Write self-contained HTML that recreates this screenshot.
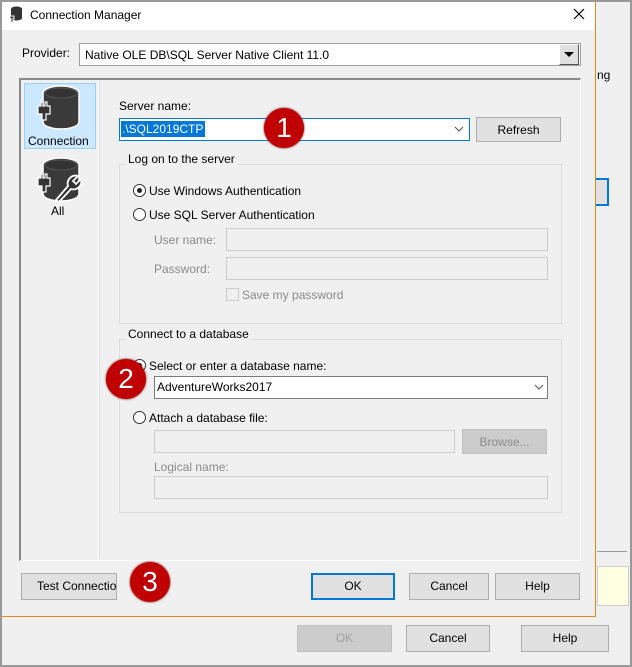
<!DOCTYPE html>
<html><head><meta charset="utf-8"><style>
*{box-sizing:border-box;margin:0;padding:0}
body{width:632px;height:667px;overflow:hidden;background:#f0f0f0;font-family:"Liberation Sans",sans-serif;font-size:12px;color:#000;position:relative}
.a{position:absolute}
.t{position:absolute;white-space:nowrap;line-height:14px}
.in{position:absolute;background:#fff;border:1px solid #7a7a7a}
.dis{position:absolute;background:#f0f0f0;border:1px solid #ccc}
.btn{position:absolute;background:#e1e1e1;border:1px solid #adadad;text-align:center;line-height:24px;white-space:nowrap;overflow:hidden}
.g{color:#6d6d6d}
.grp{position:absolute;border:1px solid #dcdcdc}
.leg{position:absolute;background:#f0f0f0;padding:0 3px;line-height:14px}
.rad{position:absolute;width:13px;height:13px;border:1px solid #333;border-radius:50%;background:#fff}
.badge{position:absolute;width:40px;height:40px;border-radius:50%;background:#c00000;color:#fff;font-size:28px;text-align:center;line-height:40px;box-shadow:0 0 2px #600}
</style></head><body>
<div class="a" style="left:0;top:0;width:632px;height:2px;background:#999"></div>
<div class="a" style="left:0;top:0;width:2px;height:667px;background:#999"></div>
<div class="a" style="left:0;top:665px;width:632px;height:2px;background:#999"></div>
<div class="a" style="left:630px;top:0;width:2px;height:667px;background:#999"></div>
<div class="t" style="left:597px;top:68px;">ng</div>
<div class="a" style="left:590px;top:178px;width:19px;height:28px;border:2px solid #0078d7;background:#e1e1e1"></div>
<div class="a" style="left:597px;top:551px;width:30px;height:1px;background:#999"></div>
<div class="a" style="left:597px;top:566px;width:32px;height:40px;background:#ffffe1;border:1px solid #ccc"></div>
<div class="btn g" style="left:297px;top:625px;width:95px;height:27px;background:#ccc;border-color:#bfbfbf;color:#a0a0a0">OK</div>
<div class="btn" style="left:406px;top:625px;width:84px;height:27px">Cancel</div>
<div class="btn" style="left:521px;top:625px;width:88px;height:27px">Help</div>

<div class="a" style="left:2px;top:2px;width:594px;height:615px;background:#f0f0f0;border-right:1px solid #e08a1e;border-bottom:1px solid #e08a1e"></div>
<div class="a" style="left:2px;top:2px;width:593px;height:28px;background:#fff"></div>
<svg class="a" style="left:9px;top:6px" width="14" height="17" viewBox="0 0 14 17"><ellipse cx="7.5" cy="3" rx="5.5" ry="2.5" fill="#333"/><rect x="2" y="3" width="11" height="9" fill="#333"/><ellipse cx="7.5" cy="12" rx="5.5" ry="2.5" fill="#333"/><rect x="1" y="10" width="4" height="3" fill="#333" stroke="#fff"/><rect x="2.5" y="13" width="1" height="3" fill="#333"/></svg>
<div class="t" style="left:30px;top:8px">Connection Manager</div>
<svg class="a" style="left:573px;top:8px" width="12" height="12"><path d="M1 1L11 11M11 1L1 11" stroke="#000" stroke-width="1.2"/></svg>

<div class="t" style="left:22px;top:46px">Provider:</div>
<div class="in" style="left:79px;top:43px;width:502px;height:23px;border-color:#a0a0a0"></div>
<div class="t" style="left:85px;top:48px">Native OLE DB\SQL Server Native Client 11.0</div>
<div class="a" style="left:559px;top:44px;width:20px;height:21px;background:#e1e1e1;border:1px solid #fff;border-right-color:#555;border-bottom-color:#555"></div>
<svg class="a" style="left:564px;top:52px" width="10" height="6"><path d="M0 0H10L5 5Z" fill="#000"/></svg>

<div class="a" style="left:19px;top:78px;width:562px;height:483px;border:2px solid #8a8a8a;border-right:1px solid #fff;border-bottom:1px solid #fff"></div>
<div class="a" style="left:21px;top:80px;width:78px;height:479px;border-right:1px solid #fff;box-shadow:1px 0 0 #ddd"></div>
<div class="a" style="left:24px;top:83px;width:72px;height:66px;background:#cce8ff;border:1px solid #99d1ff"></div>
<svg class="a" style="left:34px;top:84px" width="50" height="48" viewBox="0 0 50 48"><ellipse cx="27" cy="9" rx="18" ry="7" fill="#3a3a3a" stroke="#fff" stroke-width="1.5"/><path d="M9 9V38A18 7 0 0 0 45 38V9" fill="#3a3a3a" stroke="#fff" stroke-width="1.5"/><ellipse cx="27" cy="9" rx="16" ry="5" fill="#333" stroke="#555"/><path d="M4 22h3v-4h2v4h2v-4h2v4h3v8h-4v6h-4v-6h-4z" fill="#333" stroke="#fff" stroke-width="1.2"/></svg>
<div class="t" style="left:28px;top:134px">Connection</div>
<svg class="a" style="left:34px;top:156px" width="50" height="48" viewBox="0 0 50 48"><ellipse cx="27" cy="9" rx="18" ry="7" fill="#3a3a3a" stroke="#fff" stroke-width="1.5"/><path d="M9 9V38A18 7 0 0 0 45 38V9" fill="#3a3a3a" stroke="#fff" stroke-width="1.5"/><ellipse cx="27" cy="9" rx="16" ry="5" fill="#333" stroke="#555"/><path d="M4 22h3v-4h2v4h2v-4h2v4h3v8h-4v6h-4v-6h-4z" fill="#333" stroke="#fff" stroke-width="1.2"/><path d="M22 44L34 30A8 8 0 0 1 44 20L39 25L42 28L47 23A8 8 0 0 1 37 33L25 46Z" fill="#333" stroke="#fff" stroke-width="1.8"/></svg>
<div class="t" style="left:51px;top:204px">All</div>

<div class="t" style="left:119px;top:99px">Server name:</div>
<div class="in" style="left:119px;top:118px;width:351px;height:23px;border-color:#0078d7"></div>
<div class="a" style="left:121px;top:121px;width:84px;height:16px;background:#0078d7"></div>
<div class="t" style="left:122px;top:122px;color:#fff">.\SQL2019CTP</div>
<svg class="a" style="left:454px;top:126px" width="10" height="6"><path d="M1 1L5 5L9 1" stroke="#555" fill="none"/></svg>
<div class="btn" style="left:476px;top:117px;width:85px;height:25px">Refresh</div>

<div class="grp" style="left:119px;top:164px;width:443px;height:160px"></div>
<div class="leg" style="left:125px;top:152px">Log on to the server</div>
<div class="rad" style="left:133px;top:184px"></div><div class="a" style="left:137px;top:188px;width:5px;height:5px;border-radius:50%;background:#222"></div>
<div class="t" style="left:149px;top:184px">Use Windows Authentication</div>
<div class="rad" style="left:133px;top:208px"></div>
<div class="t" style="left:149px;top:208px">Use SQL Server Authentication</div>
<div class="t" style="left:154px;top:233px;color:#8a8a8a">User name:</div>
<div class="dis" style="left:226px;top:228px;width:322px;height:23px"></div>
<div class="t" style="left:154px;top:262px;color:#8a8a8a">Password:</div>
<div class="dis" style="left:226px;top:257px;width:322px;height:23px"></div>
<div class="a" style="left:226px;top:288px;width:13px;height:13px;border:1px solid #ccc;background:#f0f0f0"></div>
<div class="t" style="left:242px;top:288px;color:#8a8a8a">Save my password</div>

<div class="grp" style="left:119px;top:339px;width:443px;height:174px"></div>
<div class="leg" style="left:125px;top:327px">Connect to a database</div>
<div class="rad" style="left:133px;top:359px"></div><div class="a" style="left:137px;top:363px;width:5px;height:5px;border-radius:50%;background:#222"></div>
<div class="t" style="left:149px;top:359px">Select or enter a database name:</div>
<div class="in" style="left:154px;top:376px;width:394px;height:23px"></div>
<div class="t" style="left:157px;top:380px">AdventureWorks2017</div>
<svg class="a" style="left:534px;top:384px" width="10" height="6"><path d="M1 1L5 5L9 1" stroke="#555" fill="none"/></svg>
<div class="rad" style="left:133px;top:411px"></div>
<div class="t" style="left:149px;top:411px">Attach a database file:</div>
<div class="dis" style="left:154px;top:430px;width:301px;height:23px"></div>
<div class="btn" style="left:462px;top:429px;width:85px;height:25px;background:#ccc;border-color:#bfbfbf;color:#8a8a8a">Browse...</div>
<div class="t" style="left:154px;top:460px;color:#8a8a8a">Logical name:</div>
<div class="dis" style="left:154px;top:476px;width:394px;height:23px"></div>

<div class="btn" style="left:21px;top:573px;width:96px;height:27px;text-align:left;padding-left:15px">Test Connection</div>
<div class="btn" style="left:311px;top:573px;width:84px;height:27px;border:2px solid #0078d7;line-height:23px">OK</div>
<div class="btn" style="left:409px;top:573px;width:80px;height:27px">Cancel</div>
<div class="btn" style="left:495px;top:573px;width:85px;height:27px">Help</div>

<div class="badge" style="left:264px;top:108px">1</div>
<div class="badge" style="left:106px;top:359px">2</div>
<div class="badge" style="left:130px;top:562px">3</div>
</body></html>
